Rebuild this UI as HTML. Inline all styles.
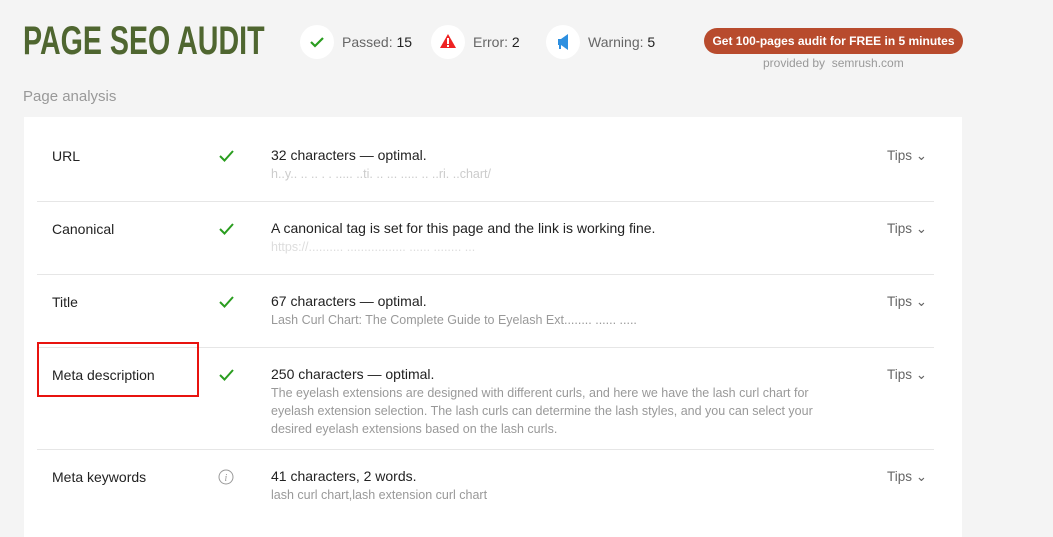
<!DOCTYPE html>
<html><head><style>
body{margin:0;width:1053px;height:515px;background:#f4f4f4;font-family:"Liberation Sans",sans-serif;position:relative;overflow:hidden;color:#222}
.a{position:absolute;white-space:nowrap}
h1{position:absolute;left:23px;top:19px;margin:0;font-family:"Liberation Sans",sans-serif;font-weight:bold;font-size:40px;color:#4f6630;transform:scaleX(0.715);transform-origin:0 0;white-space:nowrap}
.circ{position:absolute;width:34px;height:34px;border-radius:50%;background:#fff;top:25px}
.stat{position:absolute;top:34px;font-size:14px;color:#666}
.stat b{font-weight:normal;color:#222}
.btn{position:absolute;left:704px;top:28px;width:259px;height:26px;border-radius:13px;background:#b84b2d;color:#fff;font-weight:bold;font-size:12px;text-align:center;line-height:26px}
.card{position:absolute;left:24px;top:117px;width:938px;height:420px;background:#fff}
.sep{position:absolute;left:37px;width:897px;height:1px;background:#e6e6e6}
.lbl{position:absolute;left:52px;font-size:14px;color:#222}
.main{position:absolute;left:271px;font-size:14px;color:#222}
.sub{position:absolute;left:271px;font-size:12.5px;color:#999;line-height:18px}
.tips{position:absolute;left:887px;font-size:13.5px;color:#666}
.ck{position:absolute;left:218px}
</style></head><body>
<h1>PAGE SEO AUDIT</h1>
<div class="circ" style="left:300px"><svg width="34" height="34"><path d="M11 17l4 4 8-8" stroke="#2a9d1f" stroke-width="2.2" fill="none"/></svg></div>
<div class="stat" style="left:342px">Passed: <b>15</b></div>
<div class="circ" style="left:431px"><svg width="34" height="34"><path d="M17 9l8 14H9z" fill="#e22"/><rect x="16" y="13" width="2" height="6" fill="#fff"/><rect x="16" y="20" width="2" height="2" fill="#fff"/></svg></div>
<div class="stat" style="left:473px">Error: <b>2</b></div>
<div class="circ" style="left:546px"><svg width="34" height="34"><path d="M12 14h3l7-5v16l-7-5h-3z" fill="#2d8fe0"/><rect x="13" y="20" width="2" height="4" fill="#2d8fe0"/></svg></div>
<div class="stat" style="left:588px">Warning: <b>5</b></div>
<div class="btn">Get 100-pages audit for FREE in 5 minutes</div>
<div class="a" style="left:763px;top:56px;font-size:12px;color:#999">provided by&nbsp; semrush.com</div>
<div class="a" style="left:23px;top:88px;font-size:15px;color:#999">Page analysis</div>
<div class="card"></div>
<div class="sep" style="top:201px"></div><div class="sep" style="top:274px"></div><div class="sep" style="top:347px"></div><div class="sep" style="top:449px"></div>

<div class="lbl" style="top:148px">URL</div>
<svg class="ck" style="top:148px" width="18" height="16"><path d="M2 8l4.5 4.5L15 3" stroke="#2a9d1f" stroke-width="2" fill="none"/></svg>
<div class="main" style="top:147px">32 characters — optimal.</div>
<div class="sub" style="top:165px;color:#ccc">h..y.. .. .. . . ..... ..ti. .. ... ..... .. ..ri. ..chart/</div>
<div class="tips" style="top:148px">Tips ⌄</div>

<div class="lbl" style="top:221px">Canonical</div>
<svg class="ck" style="top:221px" width="18" height="16"><path d="M2 8l4.5 4.5L15 3" stroke="#2a9d1f" stroke-width="2" fill="none"/></svg>
<div class="main" style="top:220px">A canonical tag is set for this page and the link is working fine.</div>
<div class="sub" style="top:238px;color:#ddd">https://.......... ................. ...... ........ ...</div>
<div class="tips" style="top:221px">Tips ⌄</div>

<div class="lbl" style="top:294px">Title</div>
<svg class="ck" style="top:294px" width="18" height="16"><path d="M2 8l4.5 4.5L15 3" stroke="#2a9d1f" stroke-width="2" fill="none"/></svg>
<div class="main" style="top:293px">67 characters — optimal.</div>
<div class="sub" style="top:311px">Lash Curl Chart: The Complete Guide to Eyelash Ext........ ...... .....</div>
<div class="tips" style="top:294px">Tips ⌄</div>

<div class="lbl" style="top:367px">Meta description</div>
<div style="position:absolute;left:37px;top:342px;width:158px;height:51px;border:2px solid #e8130f"></div>
<svg class="ck" style="top:367px" width="18" height="16"><path d="M2 8l4.5 4.5L15 3" stroke="#2a9d1f" stroke-width="2" fill="none"/></svg>
<div class="main" style="top:366px">250 characters — optimal.</div>
<div class="sub" style="top:384px;white-space:normal;width:545px">The eyelash extensions are designed with different curls, and here we have the lash curl chart for eyelash extension selection. The lash curls can determine the lash styles, and you can select your desired eyelash extensions based on the lash curls.</div>
<div class="tips" style="top:367px">Tips ⌄</div>

<div class="lbl" style="top:469px">Meta keywords</div>
<svg class="ck" style="top:468px" width="18" height="18"><circle cx="8" cy="9" r="7" stroke="#999" fill="none"/><text x="6.5" y="13" font-size="10" fill="#999" font-style="italic" font-family="Liberation Serif">i</text></svg>
<div class="main" style="top:468px">41 characters, 2 words.</div>
<div class="sub" style="top:486px">lash curl chart,lash extension curl chart</div>
<div class="tips" style="top:469px">Tips ⌄</div>
</body></html>
